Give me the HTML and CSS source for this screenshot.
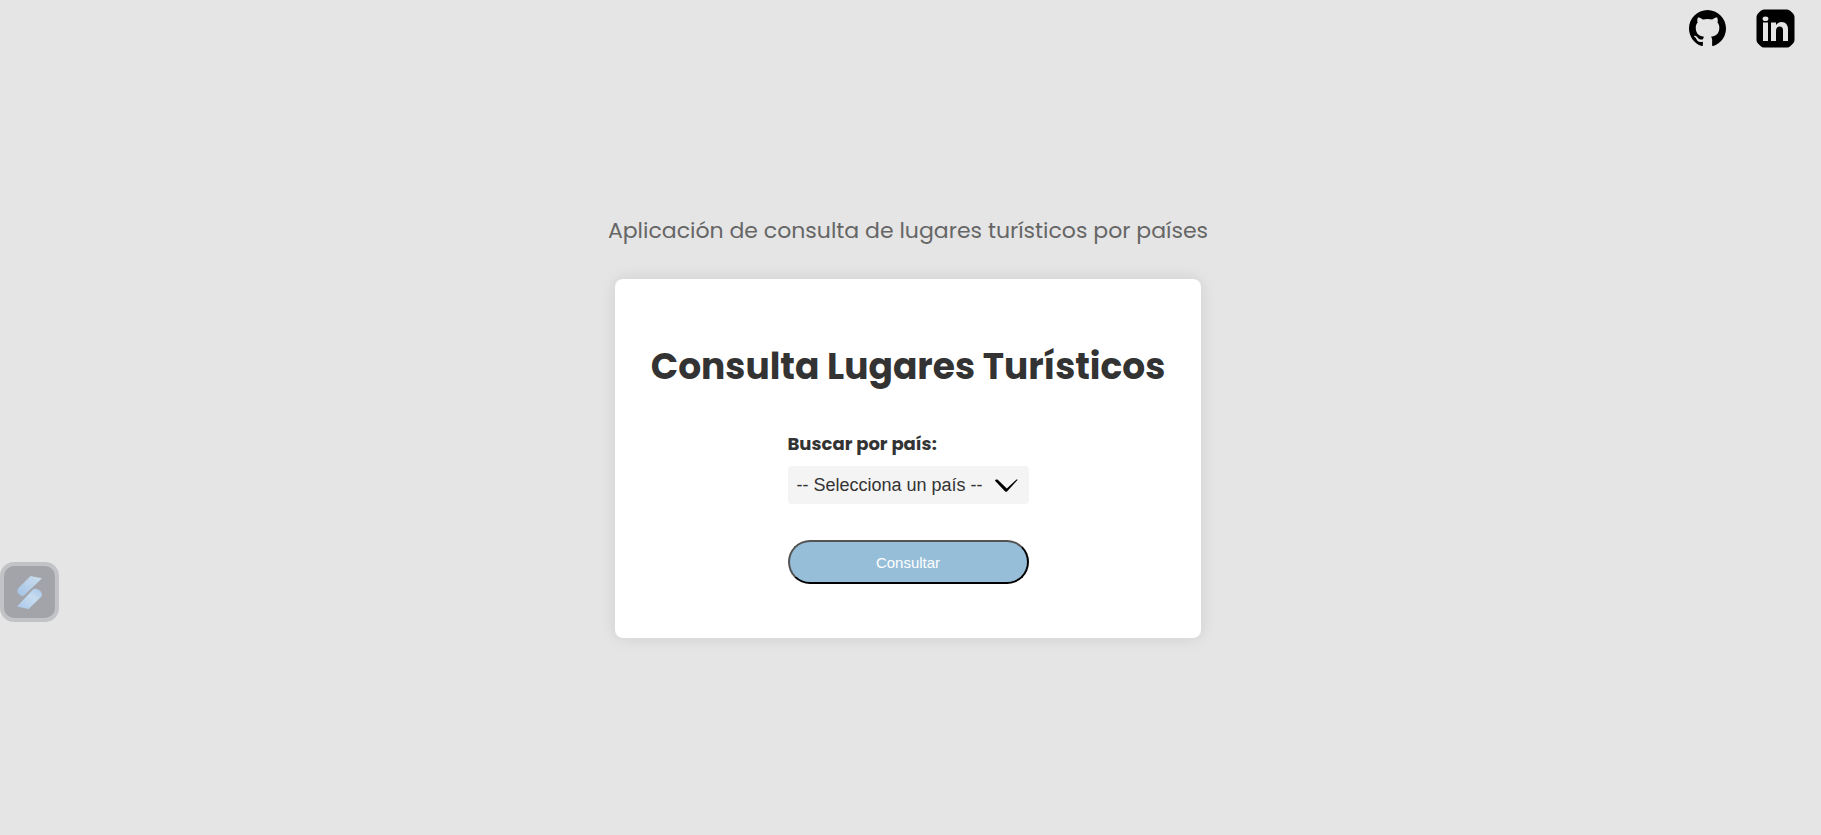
FILE: index.html
```html
<!DOCTYPE html>
<html lang="es">
<head>
<meta charset="utf-8">
<meta name="viewport" content="width=device-width, initial-scale=1">
<title>Consulta Lugares Turísticos</title>
<link rel="stylesheet" href="styles.css">
</head>
<body>
<header class="social">
  <a class="social-link" href="#github" aria-label="GitHub">
    <svg class="icon-github" viewBox="0 0 16 16" aria-hidden="true"><path d="M8 0C3.58 0 0 3.58 0 8c0 3.54 2.29 6.53 5.47 7.59.4.07.55-.17.55-.38 0-.19-.01-.82-.01-1.49-2.01.37-2.53-.49-2.69-.94-.09-.23-.48-.94-.82-1.13-.28-.15-.68-.52-.01-.53.63-.01 1.08.58 1.23.82.72 1.21 1.87.87 2.33.66.07-.52.28-.87.51-1.07-1.78-.2-3.64-.89-3.64-3.95 0-.87.31-1.59.82-2.15-.08-.2-.36-1.02.08-2.12 0 0 .67-.21 2.2.82.64-.18 1.32-.27 2-.27s1.36.09 2 .27c1.53-1.04 2.2-.82 2.2-.82.44 1.1.16 1.92.08 2.12.51.56.82 1.27.82 2.15 0 3.07-1.87 3.75-3.65 3.95.29.25.54.73.54 1.48 0 1.07-.01 1.93-.01 2.2 0 .21.15.46.55.38A8.01 8.01 0 0 0 16 8c0-4.42-3.58-8-8-8z"/></svg>
  </a>
  <a class="social-link" href="#linkedin" aria-label="LinkedIn">
    <svg class="icon-linkedin" viewBox="0 0 39 39" aria-hidden="true"><path d="M8 .5h23q2 0 3.500 1.500l2.500 2.500Q38.500 6 38.500 8v23q0 2-1.500 3.500l-2.500 2.500Q33 38.500 31 38.500H8q-2 0-3.500-1.500L2 34.500Q.5 33 .5 31V8q0-2 1.500-3.500L4.500 2Q6 .5 8 .5z"/><path fill="#e5e5e5" d="M7 13.500h5V32H7zM15 13.500h5V16q2-3 5.600-3 6.400 0 6.400 8v11h-5V21.500q0-4-3.200-4-3.800 0-3.800 4.500v10h-5z"/><ellipse fill="#e5e5e5" cx="9.500" cy="9.700" rx="2.900" ry="2.300"/></svg>
  </a>
</header>
<main class="page">
  <p class="tagline">Aplicación de consulta de lugares turísticos por países</p>
  <section class="card">
    <h1 class="title">Consulta Lugares Turísticos</h1>
    <form class="search">
      <label class="label" for="pais">Buscar por país:</label>
      <div class="select-wrap">
        <select class="select" id="pais"><option>-- Selecciona un país --</option></select>
        <svg class="chevron" viewBox="0 0 23 13" aria-hidden="true"><path d="M0 1.800Q0 .2 2.500.4L11.800 9.500 21.500.5q1.500-.3 1 .5L12 12.400q-.9.800-1.800 0z"/></svg>
      </div>
      <button class="submit" type="button">Consultar</button>
    </form>
  </section>
</main>
<button class="widget" type="button" aria-label="Abrir asistente">
  <svg class="widget-icon" viewBox="0 0 25 33" aria-hidden="true">
    <defs>
      <linearGradient id="top" x1="0" y1="1" x2="1" y2="0"><stop offset="0" stop-color="#a5c3e6"/><stop offset="1" stop-color="#cddfed"/></linearGradient>
      <linearGradient id="bottom" x1="0" y1="1" x2="1" y2="0"><stop offset="0" stop-color="#abc9eb"/><stop offset=".6" stop-color="#c6dcef"/><stop offset="1" stop-color="#a9c7e8"/></linearGradient>
    </defs>
    <path fill="url(#top)" d="M13.500 0 25 2.200 7 19.500Q5 20.500 3 19q-3-2-2.500-5 .3-1.500 2-3z"/>
    <path fill="url(#bottom)" d="M11.500 33 0 30.500 16 13.500q2.500-1.500 5 0 4 1.500 4 5.500 0 1-1.500 2.500z"/>
  </svg>
</button>
</body>
</html>
```
FILE: styles.css
```css
* { box-sizing: border-box; }

body {
  margin: 0;
  min-height: 100vh;
  display: flex;
  flex-direction: column;
  background: #e5e5e5;
  color: #333;
  font-family: Poppins, Inter, sans-serif;
  font-size: 18px;
}

.social {
  display: flex;
  justify-content: flex-end;
  align-items: center;
  gap: 30px;
  padding: 9px 26px 8px;
}

.social-link { display: flex; color: #000; }
.icon-github { width: 37px; height: 37px; }
.icon-linkedin { width: 39px; height: 39px; }

.page {
  flex: 1;
  display: flex;
  flex-direction: column;
  align-items: center;
  justify-content: center;
  padding: 0 5px 39px 0;
}

.tagline {
  margin: 0 0 31px;
  color: #666;
  font-size: 22px;
  line-height: 34px;
  text-align: center;
}

.card {
  width: 100%;
  max-width: 586px;
  padding: 60px 32px 54px;
  display: flex;
  flex-direction: column;
  align-items: center;
  background: #fff;
  border-radius: 8px;
  box-shadow: 0 0 16px rgba(0, 0, 0, 0.1);
}

.title {
  margin: 0 0 37px;
  font-size: 36px;
  line-height: 56px;
  font-weight: 700;
  text-align: center;
}

.search { display: flex; flex-direction: column; }

.label {
  margin-bottom: 10px;
  line-height: 24px;
  font-weight: 700;
}

.select-wrap { position: relative; display: flex; }

.select {
  appearance: none;
  height: 38px;
  padding: 0 45px 0 9px;
  border: 0;
  border-radius: 4px;
  background: #f4f4f4;
  color: #333;
  font-family: "Liberation Sans", Arial, sans-serif;
  font-size: 18px;
}

.chevron {
  position: absolute;
  right: 11px;
  top: 13px;
  width: 23px;
  height: 13px;
  pointer-events: none;
}

.submit {
  height: 44px;
  margin-top: 36px;
  border: 2px outset #000;
  border-radius: 22px;
  background: #96bed8;
  color: #fff;
  font-family: "Liberation Sans", Arial, sans-serif;
  font-size: 15px;
}

.widget {
  position: fixed;
  left: 0;
  bottom: 213px;
  width: 59px;
  height: 60px;
  padding: 0;
  display: grid;
  place-items: center;
  border: 4px solid #c2c3c7;
  border-radius: 14px;
  background: #a2a4a9;
}

.widget-icon { width: 25px; height: 33px; }
```
